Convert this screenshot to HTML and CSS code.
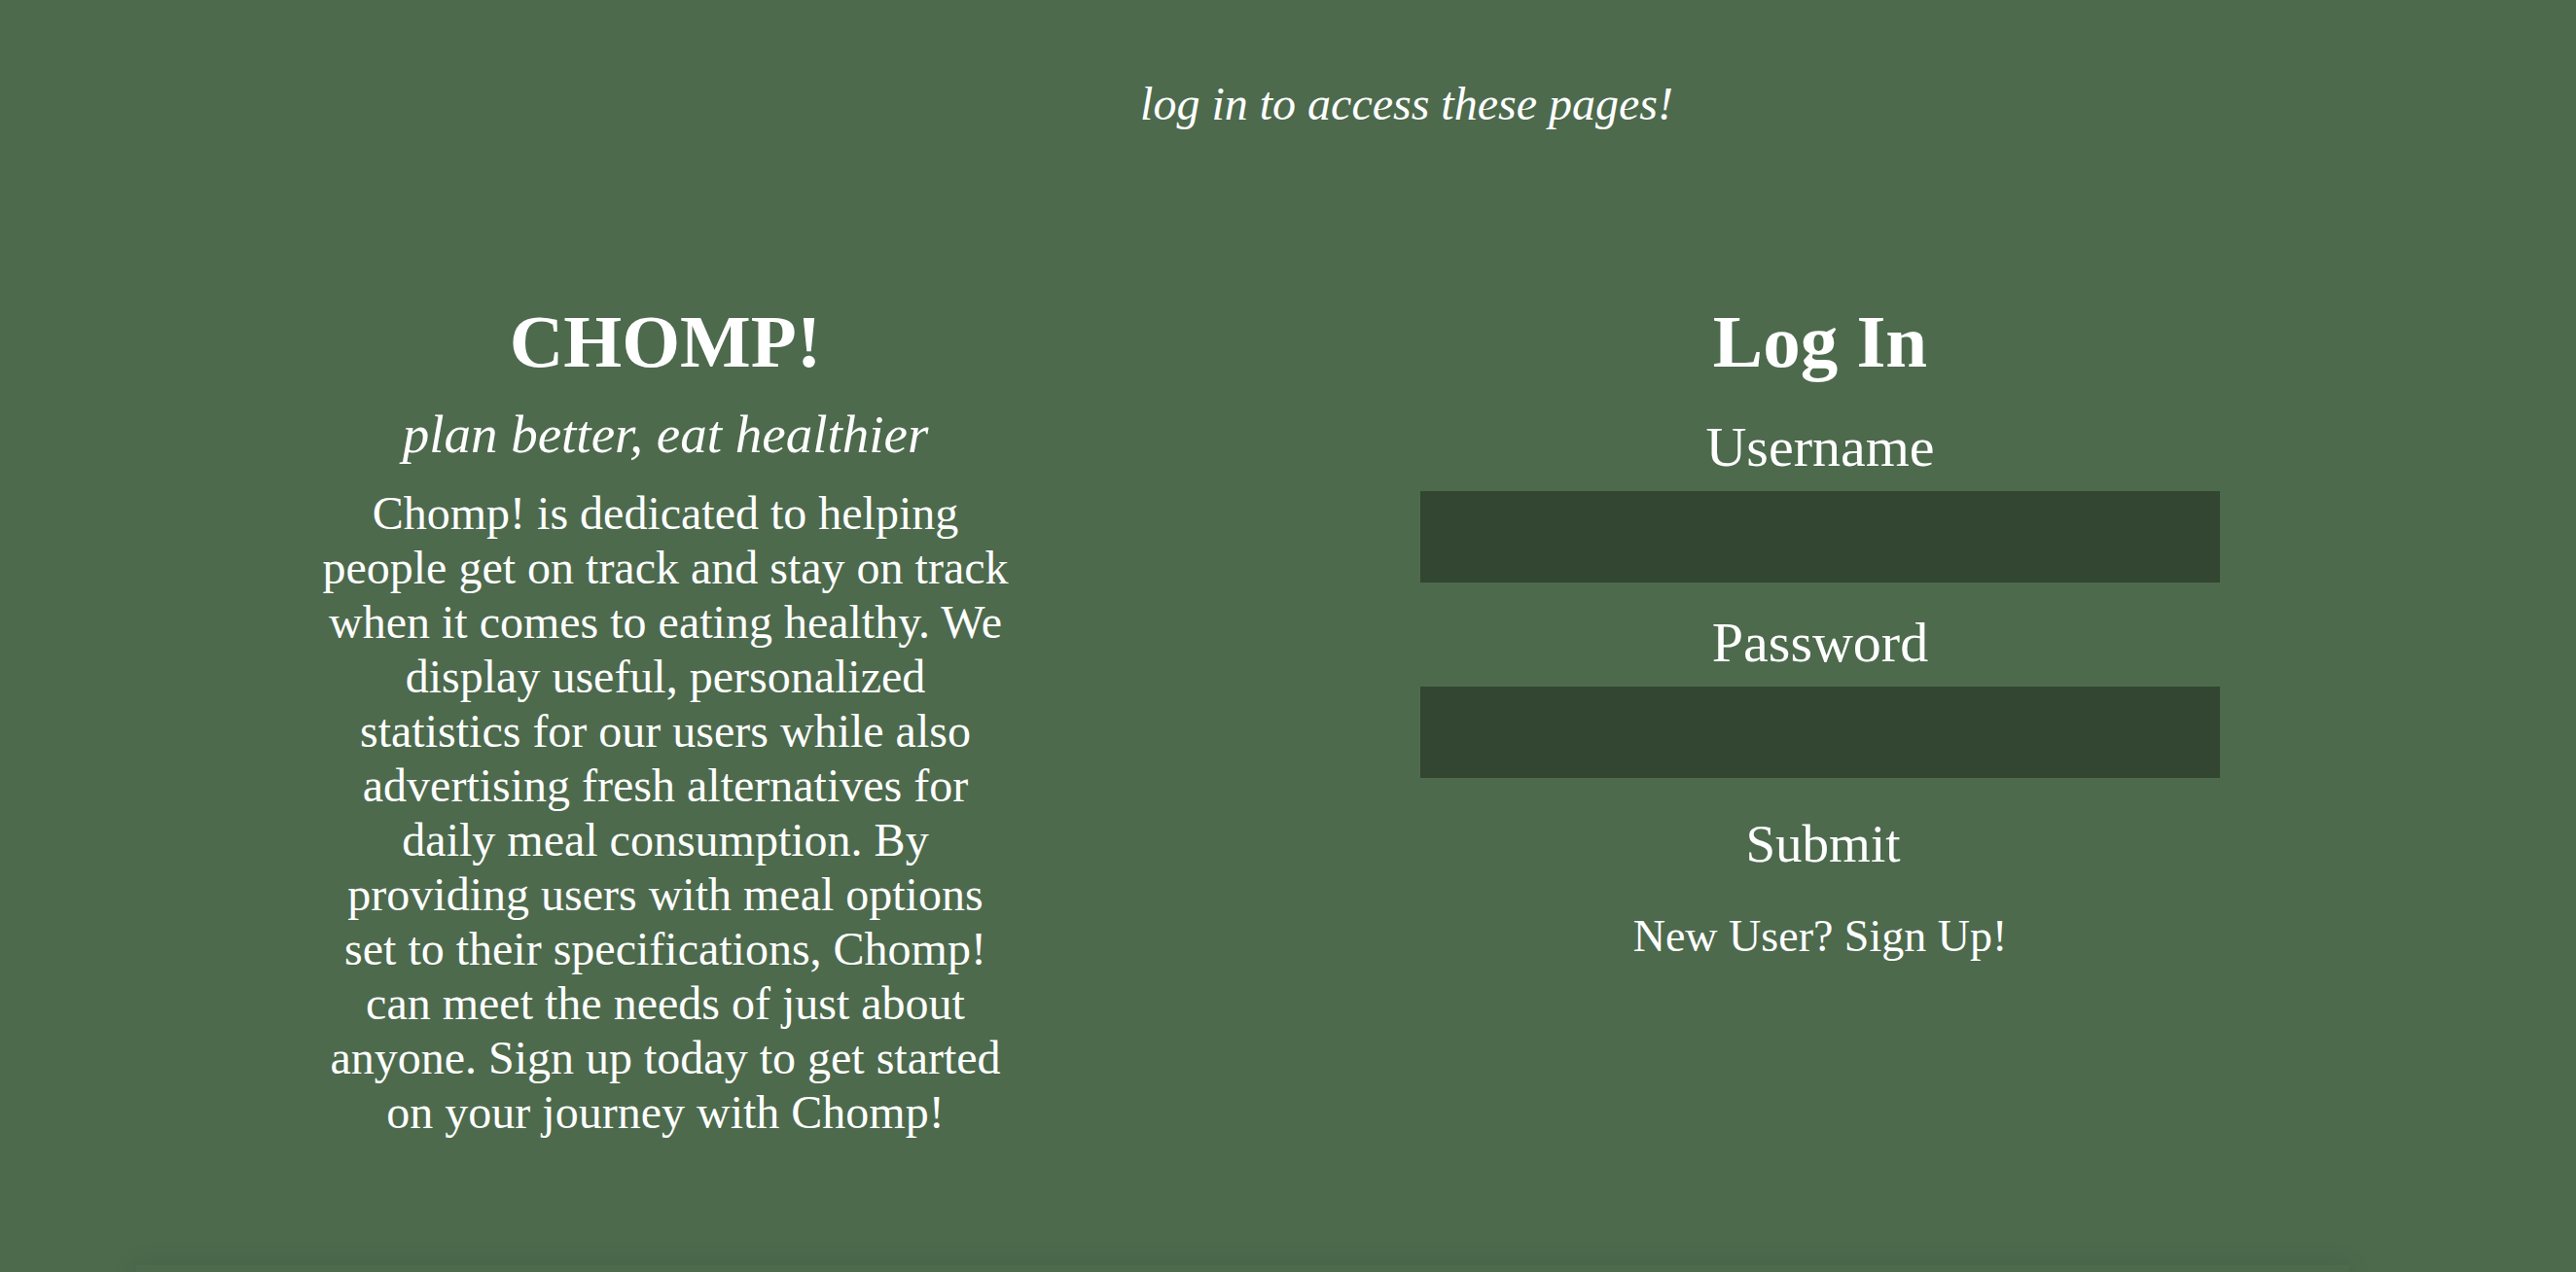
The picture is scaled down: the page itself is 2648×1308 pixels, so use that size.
FILE: index.html
```html
<!DOCTYPE html>
<html lang="en">
<head>
<meta charset="utf-8">
<title>Chomp! - Log In</title>
<link rel="stylesheet" href="styles.css">
</head>
<body>
<header class="notice">
  <p class="notice-text">log in to access these pages!</p>
</header>
<main class="panel">
  <section class="about">
    <h1 class="title">CHOMP!</h1>
    <p class="tagline">plan better, eat healthier</p>
    <p class="blurb">Chomp! is dedicated to helping people get on track and stay on track when it comes to eating healthy. We display useful, personalized statistics for our users while also advertising fresh alternatives for daily meal consumption. By providing users with meal options set to their specifications, Chomp! can meet the needs of just about anyone. Sign up today to get started on your journey with Chomp!</p>
  </section>
  <section class="login">
    <h1 class="title">Log In</h1>
    <form class="login-form">
      <label class="field-label" for="username">Username</label>
      <input class="field-input" id="username" type="text">
      <label class="field-label field-label-second" for="password">Password</label>
      <input class="field-input" id="password" type="password">
      <button class="submit" type="button">Submit</button>
    </form>
    <a class="signup" href="#">New User? Sign Up!</a>
  </section>
</main>
<footer class="footer"></footer>
</body>
</html>
```
FILE: styles.css
```css
html, body {
  margin: 0;
  padding: 0;
}
body {
  background: #4d6a4d;
  color: #ffffff;
  font-family: "Liberation Serif", "Times New Roman", serif;
  height: 1308px;
  overflow: hidden;
}
.notice {
  padding-left: 244px;
  text-align: center;
}
.notice-text {
  margin: 79px 0 0;
  font-size: 48px;
  font-style: italic;
}
.panel {
  width: 2275px;
  height: 994px;
  margin: 173px 0 0 140px;
  display: grid;
  grid-template-columns: 1088px 1088px;
  column-gap: 99px;
  align-items: start;
}
.about, .login {
  display: flex;
  flex-direction: column;
  align-items: center;
  text-align: center;
}
.title {
  margin: 0;
  font-size: 77px;
  font-weight: bold;
}
.tagline {
  margin: 19px 0 0;
  font-size: 55px;
  font-style: italic;
}
.blurb {
  margin: 22px 0 0;
  max-width: 706px;
  font-size: 48px;
  line-height: 56px;
}
.login-form {
  width: 822px;
  display: flex;
  flex-direction: column;
  align-items: center;
  margin-top: 30px;
}
.field-label {
  font-size: 58px;
}
.field-label-second {
  margin-top: 28px;
}
.field-input {
  box-sizing: border-box;
  width: 822px;
  height: 94px;
  margin-top: 12px;
  border: none;
  background: #334632;
  color: #ffffff;
  font-family: inherit;
  font-size: 40px;
  padding: 0 16px;
  outline: none;
}
.submit {
  margin: 36px 0 0 6px;
  padding: 0;
  border: none;
  background: transparent;
  color: #ffffff;
  font-family: inherit;
  font-size: 55px;
  line-height: normal;
  cursor: pointer;
}
.signup {
  margin-top: 37px;
  color: #ffffff;
  text-decoration: none;
  font-size: 46px;
}
.footer {
  width: 2275px;
  height: 120px;
  margin-left: 140px;
  box-shadow: 0 0 28px rgba(0, 0, 0, 0.08);
}
```
